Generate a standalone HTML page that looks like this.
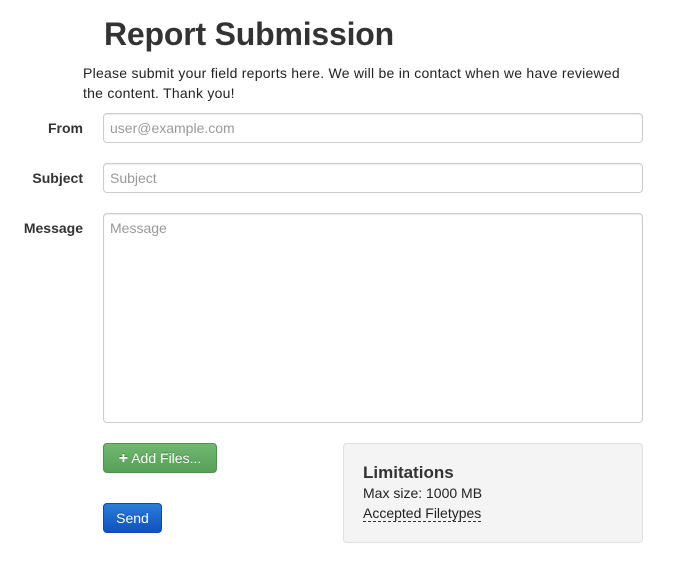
<!DOCTYPE html>
<html><head><style>
*{box-sizing:border-box;margin:0;padding:0}
body{width:677px;height:577px;background:#fff;font-family:"Liberation Sans",sans-serif;color:#333;position:relative;overflow:hidden}
.a{position:absolute}
h1{position:absolute;left:104px;top:14px;font-size:32px;font-weight:bold;color:#333;line-height:40px;letter-spacing:-0.2px}
p{position:absolute;left:83px;top:63px;width:580px;font-size:14px;line-height:20px;color:#222;letter-spacing:0.25px;white-space:nowrap}
.lbl{position:absolute;font-size:14px;font-weight:bold;color:#333;text-align:right;width:83px;left:0}
.in{position:absolute;left:103px;width:540px;border:1px solid #ccc;border-radius:4px;box-shadow:inset 0 1px 1px rgba(0,0,0,.075);font-size:14px;color:#999;padding:6px 6px;line-height:16px}
.btn{position:absolute;border-radius:4px;color:#fff;font-size:14px;text-align:center;line-height:28px;text-shadow:0 -1px 0 rgba(0,0,0,.25)}
</style></head><body>
<h1>Report Submission</h1>
<p>Please submit your field reports here. We will be in contact when we have reviewed<br>the content. Thank you!</p>
<div class="lbl" style="top:120px">From</div>
<div class="in" style="top:113px;height:30px">user@example.com</div>
<div class="lbl" style="top:170px">Subject</div>
<div class="in" style="top:163px;height:30px">Subject</div>
<div class="lbl" style="top:220px">Message</div>
<div class="in" style="top:213px;height:210px">Message</div>
<div class="btn" style="left:103px;top:443px;width:114px;height:30px;background:linear-gradient(#70b870,#58a058);border:1px solid #4e914e"><b style="font-size:16px">+</b> Add Files...</div>
<div class="btn" style="left:103px;top:503px;width:59px;height:30px;background:linear-gradient(#2a7ed8,#1150c0);border:1px solid #1048b0">Send</div>
<div class="a" style="left:343px;top:443px;width:300px;height:100px;background:#f4f4f4;border:1px solid #e0e0e0;border-radius:4px"></div>
<div class="a" style="left:363px;top:463px;font-size:17px;font-weight:bold;color:#333">Limitations</div>
<div class="a" style="left:363px;top:485px;font-size:14px;color:#222">Max size: 1000 MB</div>
<div class="a" style="left:363px;top:505px;font-size:14px;color:#222;border-bottom:1px dashed #333;line-height:16px">Accepted Filetypes</div>
</body></html>
